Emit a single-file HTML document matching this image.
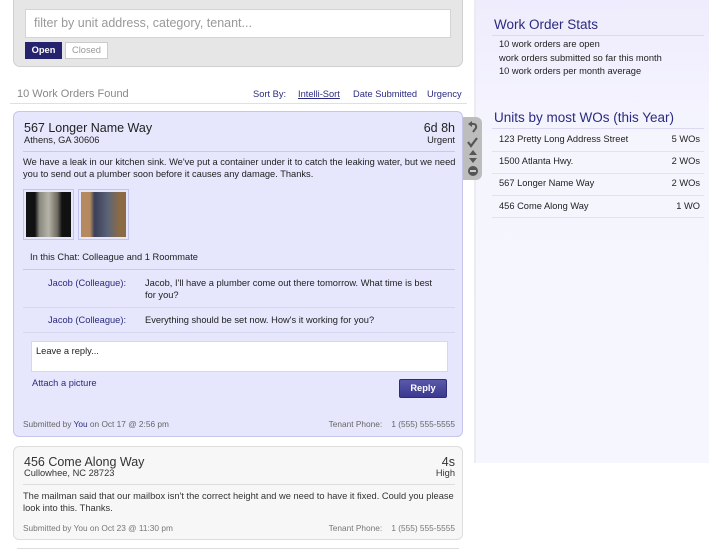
<!DOCTYPE html>
<html><head><meta charset="utf-8"><style>
*{margin:0;padding:0;box-sizing:border-box}
body{width:709px;height:550px;overflow:hidden;background:#fff;font-family:"Liberation Sans",sans-serif;font-size:9.3px;color:#222;position:relative}
.a{position:absolute;white-space:nowrap}
.r{position:absolute;white-space:nowrap;right:254px;text-align:right}
.rs{position:absolute;white-space:nowrap;right:9px;text-align:right}
.ln{position:absolute;height:1px}
.blue{color:#2b2b80}
</style></head><body>
<!-- right sidebar -->
<div class="a" style="left:474px;top:0;width:235px;height:463px;background:linear-gradient(#efecfd,#f5f5fe 30%,#f6f6fe);border-left:2px solid #ebebf0"></div>
<div class="a blue" style="left:494px;top:17px;font-size:13.5px">Work Order Stats</div>
<div class="ln" style="left:492px;top:35px;width:212px;background:#dcdaf0"></div>
<div class="a" style="left:499px;top:38px;line-height:13.5px">10 work orders are open<br>work orders submitted so far this month<br>10 work orders per month average</div>
<div class="a blue" style="left:494px;top:110px;font-size:13.5px">Units by most WOs (this Year)</div>
<div class="ln" style="left:492px;top:128px;width:212px;background:#dcdaf0"></div>
<div class="a" style="left:499px;top:134px">123 Pretty Long Address Street</div><div class="rs" style="top:134px">5 WOs</div>
<div class="ln" style="left:492px;top:151px;width:212px;background:#e4e2f2"></div>
<div class="a" style="left:499px;top:156px">1500 Atlanta Hwy.</div><div class="rs" style="top:156px">2 WOs</div>
<div class="ln" style="left:492px;top:173px;width:212px;background:#e4e2f2"></div>
<div class="a" style="left:499px;top:178px">567 Longer Name Way</div><div class="rs" style="top:178px">2 WOs</div>
<div class="ln" style="left:492px;top:195px;width:212px;background:#e4e2f2"></div>
<div class="a" style="left:499px;top:201px">456 Come Along Way</div><div class="rs" style="top:201px">1 WO</div>
<div class="ln" style="left:492px;top:217px;width:212px;background:#e4e2f2"></div>

<!-- filter panel -->
<div class="a" style="left:13px;top:-6px;width:450px;height:73px;background:#e6e6e6;border:1px solid #d0d0d0;border-radius:7px"></div>
<div class="a" style="left:25px;top:9px;width:426px;height:29px;background:#fff;border:1px solid #d4d4d4;color:#999;font-size:12.5px;padding:6px 8px">filter by unit address, category, tenant...</div>
<div class="a" style="left:25px;top:42px;width:37px;height:17px;background:#26236e;color:#fff;font-weight:bold;text-align:center;line-height:17px">Open</div>
<div class="a" style="left:65px;top:42px;width:43px;height:17px;background:#fff;border:1px solid #ccc;color:#999;text-align:center;line-height:15px">Closed</div>

<div class="a" style="left:17px;top:88px;font-size:11px;color:#888">10 Work Orders Found</div>
<div class="a blue" style="left:253px;top:89px">Sort By:</div>
<div class="a blue" style="left:298px;top:89px;text-decoration:underline">Intelli-Sort</div>
<div class="a blue" style="left:353px;top:89px">Date Submitted</div>
<div class="a blue" style="left:427px;top:89px">Urgency</div>
<div class="ln" style="left:10px;top:103px;width:457px;background:#e0e0e0"></div>

<!-- card 1 -->
<div class="a" style="left:13px;top:111px;width:450px;height:326px;background:#e6e6fc;border:1px solid #c6c6ec;border-radius:6px"></div>
<div class="a" style="left:24px;top:121px;font-size:12.5px">567 Longer Name Way</div>
<div class="a" style="left:24px;top:135px">Athens, GA 30606</div>
<div class="r" style="top:121px;font-size:12.5px">6d 8h</div>
<div class="r" style="top:135px">Urgent</div>
<div class="ln" style="left:23px;top:151px;width:432px;background:#c9c9e6"></div>
<div class="a" style="left:23px;top:157px;line-height:11.5px">We have a leak in our kitchen sink. We've put a container under it to catch the leaking water, but we need<br>you to send out a plumber soon before it causes any damage. Thanks.</div>
<div class="a" style="left:23px;top:189px;width:51px;height:51px;border:1px solid #c3c3ef;padding:2px;background:#e6e6fc"><div style="width:100%;height:100%;background:linear-gradient(90deg,#111 20%,#8a8880 30%,#b7b3a8 50%,#6d6a60 70%,#111 80%)"></div></div>
<div class="a" style="left:78px;top:189px;width:51px;height:51px;border:1px solid #c3c3ef;padding:2px;background:#e6e6fc"><div style="width:100%;height:100%;background:linear-gradient(90deg,#b58a60 20%,#3a3f58 30%,#5c6478 60%,#8b6b45 85%)"></div></div>
<div class="a" style="left:30px;top:252px">In this Chat: Colleague and 1 Roommate</div>
<div class="ln" style="left:23px;top:269px;width:432px;background:#cacae6"></div>
<div class="a blue" style="left:48px;top:278px">Jacob (Colleague):</div>
<div class="a" style="left:145px;top:278px;line-height:11.5px">Jacob, I'll have a plumber come out there tomorrow. What time is best<br>for you?</div>
<div class="ln" style="left:23px;top:307px;width:432px;background:#d6d6ee"></div>
<div class="a blue" style="left:48px;top:315px">Jacob (Colleague):</div>
<div class="a" style="left:145px;top:315px">Everything should be set now. How's it working for you?</div>
<div class="ln" style="left:23px;top:332px;width:432px;background:#d6d6ee"></div>
<div class="a" style="left:31px;top:341px;width:417px;height:31px;background:#fff;border:1px solid #d6d6ee;padding:4px 4px">Leave a reply...</div>
<div class="a blue" style="left:32px;top:378px">Attach a picture</div>
<div class="a" style="left:399px;top:379px;width:48px;height:19px;background:linear-gradient(#5a58a8,#3b3990);border:1px solid #2e2c78;border-radius:2px;color:#fff;font-weight:bold;text-align:center;line-height:17px">Reply</div>
<div class="a" style="left:23px;top:419px;font-size:8.3px;color:#666">Submitted by <span class="blue">You</span> on Oct 17 @ 2:56 pm</div>
<div class="r" style="top:419px;font-size:8.3px;color:#666">Tenant Phone:&nbsp;&nbsp;&nbsp; 1 (555) 555-5555</div>

<!-- side tab -->
<div class="a" style="left:463px;top:117px;width:19px;height:63px;background:#bdbdbd;border-radius:0 6px 6px 0"></div>
<svg class="a" style="left:467px;top:121px" width="12" height="57" viewBox="0 0 12 57">
<path d="M4 3 Q10 2 9 7 L6 11" fill="none" stroke="#555" stroke-width="2"/><path d="M1 3 L5 0 L5 6Z" fill="#555"/>
<path d="M1 21 L4 25 L10 17" fill="none" stroke="#555" stroke-width="2.2"/>
<path d="M2 34 L6 29 L10 34Z M2 37 L10 37 L6 42Z" fill="#555"/>
<circle cx="6" cy="50" r="5" fill="#555"/><rect x="3" y="49" width="6" height="2" fill="#ccc"/>
</svg>

<!-- card 2 -->
<div class="a" style="left:13px;top:446px;width:450px;height:94px;background:#f7f7f7;border:1px solid #ddd;border-radius:6px"></div>
<div class="a" style="left:24px;top:455px;font-size:12.5px;color:#333">456 Come Along Way</div>
<div class="a" style="left:24px;top:468px;color:#333">Cullowhee, NC 28723</div>
<div class="r" style="top:455px;font-size:12.5px;color:#333">4s</div>
<div class="r" style="top:468px;color:#333">High</div>
<div class="ln" style="left:23px;top:484px;width:432px;background:#ddd"></div>
<div class="a" style="left:23px;top:491px;line-height:11.5px;color:#333">The mailman said that our mailbox isn't the correct height and we need to have it fixed. Could you please<br>look into this. Thanks.</div>
<div class="a" style="left:23px;top:523px;font-size:8.3px;color:#777">Submitted by You on Oct 23 @ 11:30 pm</div>
<div class="r" style="top:523px;font-size:8.3px;color:#777">Tenant Phone:&nbsp;&nbsp;&nbsp; 1 (555) 555-5555</div>
<div class="ln" style="left:17px;top:548px;width:442px;background:#ddd"></div>
</body></html>
